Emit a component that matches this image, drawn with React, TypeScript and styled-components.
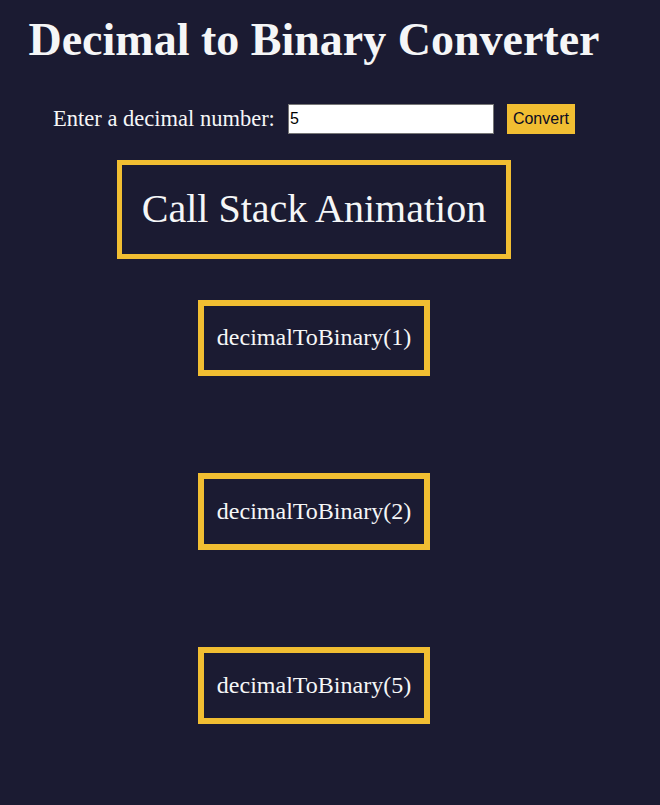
import React from "react";
import styled, { createGlobalStyle } from "styled-components";

const GlobalStyle = createGlobalStyle`
  html, body {
    margin: 0;
    padding: 0;
    background-color: #1b1b32;
    color: #f5f6f7;
    font-family: "Liberation Serif", "Times New Roman", serif;
  }
`;

const Page = styled.main`
  width: 628px;
  min-height: 805px;
  display: flex;
  flex-direction: column;
  align-items: center;
  text-align: center;
`;

const Title = styled.h1`
  margin: 14px 0 0;
  font-size: 46px;
  font-weight: bold;
  line-height: 1.15;
`;

const InputRow = styled.div`
  display: flex;
  align-items: center;
  gap: 13px;
  margin-top: 37px;
`;

const Label = styled.label`
  font-size: 22.5px;
  line-height: 1.15;
`;

const NumberInput = styled.input`
  width: 206px;
  height: 30px;
  box-sizing: border-box;
  padding: 0 1px;
  font-family: "Liberation Sans", Arial, sans-serif;
  font-size: 16px;
  color: #000;
  background: #fff;
  border: 1px solid #767676;
`;

const ConvertButton = styled.button`
  height: 30px;
  padding: 0 6px;
  font-family: "Liberation Sans", Arial, sans-serif;
  font-size: 16px;
  color: #0a0a23;
  background-color: #f1be32;
  border: none;
`;

const AnimationBox = styled.div`
  margin-top: 26px;
  padding: 21.5px 20px;
  border: 5px solid #f1be32;
  font-size: 40px;
  line-height: 1.15;
`;

const Stack = styled.div`
  display: flex;
  flex-direction: column;
  align-items: center;
  gap: 97px;
  margin-top: 41px;
`;

const Frame = styled.div`
  padding: 18.5px 13px;
  border: 6px solid #f1be32;
  font-size: 24px;
  line-height: 1.15;
`;

const frames = [1, 2, 5];

export default function App() {
  return (
    <>
      <GlobalStyle />
      <Page>
        <Title>Decimal to Binary Converter</Title>
        <InputRow>
          <Label htmlFor="number-input">Enter a decimal number:</Label>
          <NumberInput id="number-input" defaultValue="5" />
          <ConvertButton>Convert</ConvertButton>
        </InputRow>
        <AnimationBox>Call Stack Animation</AnimationBox>
        <Stack>
          {frames.map((n) => (
            <Frame key={n}>decimalToBinary({n})</Frame>
          ))}
        </Stack>
      </Page>
    </>
  );
}
